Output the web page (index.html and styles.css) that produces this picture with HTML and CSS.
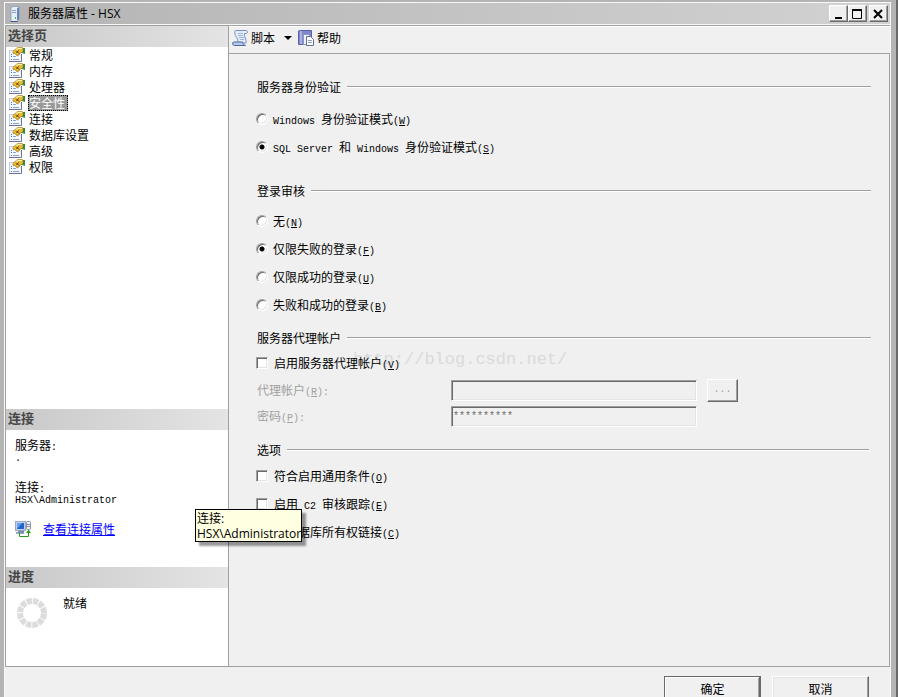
FILE: index.html
```html
<!DOCTYPE html>
<html lang="zh-CN">
<head>
  <meta charset="UTF-8">
  <meta name="viewport" content="width=device-width, initial-scale=1.0">
  <title>服务器属性 - HSX</title>
  <link rel="stylesheet" href="styles.css">
</head>
<body>
  <!-- Shared icons -->
  <svg class="sprite" aria-hidden="true">
    <symbol id="icon-page" viewBox="0 0 16 16">
      <path d="M0 3.500h12v11H0z" fill="#f4f7fd"/>
      <path d="M.5 15V3.500H5" fill="none" stroke="#c3cbe0"/>
      <path d="M0 14.500h12.500V7" fill="none" stroke="#66749f"/>
      <path d="M2 7.500h1M2 9.500h1M2 12.500h1" stroke="#3a78d8"/>
      <path d="M4 9.500h3M4 12.500h6" stroke="#8f9fc8"/>
      <path d="M13 1h3v6l-3-1z" fill="#2f8f3c"/>
      <path d="M4 4.500L7 1.500 9 .5h4l1 .5v4l-3 1-1 2-2 1-1-2-3-.5z" fill="#e9b730" stroke="#9c7218" stroke-width=".6"/>
      <path d="M7 2.500L9 1.500h4" stroke="#fff3a8" stroke-width="1.200" fill="none"/>
      <path d="M7.500 4l2.500 2.500M9.500 3.500L7.500 6" stroke="#5a4012" fill="none"/>
    </symbol>
  </svg>

  <div class="window">
    <header class="titlebar">
      <svg class="title-icon" viewBox="0 0 16 16" aria-hidden="true">
        <path d="M4 2l2-1.500h6V13l-2 2.500H4z" fill="#e6eefa" stroke="#8c9cb8" stroke-width=".8"/>
        <path d="M10 2.500V15l2-2V1z" fill="#6483b8"/>
        <path d="M5 4.500h4M5 6.500h4" stroke="#8fa5c8"/>
        <path d="M4 15.500h6.500" stroke="#3b527c"/>
        <rect x="8" y="11" width="1" height="2" fill="#47b04a"/>
      </svg>
      <h1 class="title">服务器属性 - HSX</h1>
      <div class="window-buttons">
        <button class="window-button" type="button" aria-label="最小化">
          <svg viewBox="0 0 14 13"><path d="M4 11h7" stroke="#000" stroke-width="2"/></svg>
        </button>
        <button class="window-button" type="button" aria-label="最大化">
          <svg viewBox="0 0 14 13"><path d="M2.500 2v9.500h9V2" fill="none" stroke="#000"/><path d="M2 3h10" stroke="#000" stroke-width="2"/></svg>
        </button>
        <button class="window-button close" type="button" aria-label="关闭">
          <svg viewBox="0 0 14 13"><path d="M3 3l8 8M11 3l-8 8" stroke="#000" stroke-width="2"/></svg>
        </button>
      </div>
    </header>

    <div class="workspace">
      <aside class="sidebar">
        <h2 class="panel-title">选择页</h2>
        <nav class="pages">
          <a href="#"><svg><use href="#icon-page"/></svg><span>常规</span></a>
          <a href="#"><svg><use href="#icon-page"/></svg><span>内存</span></a>
          <a href="#"><svg><use href="#icon-page"/></svg><span>处理器</span></a>
          <a href="#" class="selected"><svg><use href="#icon-page"/></svg><span>安全性</span></a>
          <a href="#"><svg><use href="#icon-page"/></svg><span>连接</span></a>
          <a href="#"><svg><use href="#icon-page"/></svg><span>数据库设置</span></a>
          <a href="#"><svg><use href="#icon-page"/></svg><span>高级</span></a>
          <a href="#"><svg><use href="#icon-page"/></svg><span>权限</span></a>
        </nav>

        <h2 class="panel-title">连接</h2>
        <div class="connection">
          <p>服务器<span class="en">:</span></p>
          <p class="value en">.</p>
          <p class="second">连接<span class="en">:</span></p>
          <p class="value en">HSX\Administrator</p>
          <div class="view-link">
            <svg viewBox="0 0 16 16" aria-hidden="true">
              <rect x=".5" y=".5" width="10" height="9" fill="#c3d0e8" stroke="#9aa8c4"/>
              <rect x="2" y="2" width="7" height="6" fill="#2463cf"/>
              <path d="M2 8l5-6H2z" fill="#63a0f0"/>
              <path d="M3 10.500h6M1 12h8" stroke="#7c8db0" stroke-width="1.500"/>
              <rect x="11.500" y=".5" width="4" height="8" rx="1" fill="#eef2f8" stroke="#8a93a6"/>
              <path d="M12 3.500h3M12 5.500h3" stroke="#8a93a6"/>
              <path d="M4.500 12v3.500h9V11" fill="none" stroke="#2f9a22"/>
              <path d="M11 12l2.500-3.500L16 12z" fill="#2f9a22"/>
            </svg>
            <a href="#">查看连接属性</a>
            <div class="tooltip" role="tooltip">连接:<br>HSX\Administrator</div>
          </div>
        </div>

        <h2 class="panel-title">进度</h2>
        <div class="progress">
          <svg viewBox="0 0 30 30" aria-hidden="true">
            <circle cx="15" cy="15" r="12" fill="none" stroke="#dcdcdc" stroke-width="6" stroke-dasharray="5.283 1" stroke-dashoffset="-.5"/>
          </svg>
          <span>就绪</span>
        </div>
      </aside>

      <main class="content">
        <div class="toolbar">
          <button class="tool" type="button">
            <svg viewBox="0 0 16 16" aria-hidden="true">
              <path d="M4 .5h10c2 0 2 3 0 3h-1.500c-1 3 2.500 6 1.500 9.500H5C8 9 2 6 3 3 2 2 3 .5 4 .5z" fill="#e3edfb" stroke="#7790bd"/>
              <path d="M1.500 12h9c0 2 1.500 3 3 3.500H2.500c-2 0-2.500-2.500-1-3.500z" fill="#b6c9ea" stroke="#4d689e"/>
              <path d="M6 3.500h5M6 5.500h5M7 7.500h5M8 9.500h4" stroke="#9db6e0"/>
            </svg>
            脚本
          </button>
          <button class="tool-arrow" type="button" aria-label="脚本选项"></button>
          <button class="tool" type="button">
            <svg viewBox="0 0 16 16" aria-hidden="true">
              <path d="M.5 1l1-.5h12v13l-1 1H.5z" fill="#8286cc" stroke="#5c60a4"/>
              <path d="M3 1v13" stroke="#d4d6f4"/>
              <path d="M5.500 4.500h5l2 2v8h-7z" fill="#eef3fb" stroke="#8c9abc"/>
              <path d="M8.500 6.500h4l3 3v6h-7z" fill="#fff" stroke="#5c7098"/>
              <path d="M10 10.500h4M10 12.500h4" stroke="#8ca2cc"/>
            </svg>
            帮助
          </button>
        </div>

        <form class="settings">
          <section class="group" role="radiogroup" aria-labelledby="auth">
            <h3 id="auth">服务器身份验证</h3>
            <label class="option"><input type="radio" name="auth"><span><span class="en">Windows </span>身份验证模式<span class="en">(<u>W</u>)</span></span></label>
            <label class="option"><input type="radio" name="auth" checked><span><span class="en">SQL Server </span>和<span class="en"> Windows </span>身份验证模式<span class="en">(<u>S</u>)</span></span></label>
          </section>

          <section class="group audit" role="radiogroup" aria-labelledby="audit">
            <h3 id="audit">登录审核</h3>
            <label class="option"><input type="radio" name="audit"><span>无<span class="en">(<u>N</u>)</span></span></label>
            <label class="option"><input type="radio" name="audit" checked><span>仅限失败的登录<span class="en">(<u>F</u>)</span></span></label>
            <label class="option"><input type="radio" name="audit"><span>仅限成功的登录<span class="en">(<u>U</u>)</span></span></label>
            <label class="option"><input type="radio" name="audit"><span>失败和成功的登录<span class="en">(<u>B</u>)</span></span></label>
          </section>

          <section class="group proxy">
            <div class="watermark">http://blog.csdn.net/</div>
            <h3>服务器代理帐户</h3>
            <label class="option"><input type="checkbox"><span>启用服务器代理帐户<span class="en">(<u>V</u>)</span></span></label>
            <div class="field">
              <label for="account">代理帐户<span class="en">(<u>R</u>):</span></label>
              <input id="account" type="text" disabled>
              <button class="browse" type="button" disabled>...</button>
            </div>
            <div class="field">
              <label for="password">密码<span class="en">(<u>P</u>):</span></label>
              <input id="password" type="text" value="**********" disabled>
            </div>
          </section>

          <section class="group options">
            <h3>选项</h3>
            <label class="option"><input type="checkbox"><span>符合启用通用条件<span class="en">(<u>O</u>)</span></span></label>
            <label class="option"><input type="checkbox"><span>启用<span class="en"> C2 </span>审核跟踪<span class="en">(<u>E</u>)</span></span></label>
            <label class="option"><input type="checkbox"><span>跨数据库所有权链接<span class="en">(<u>C</u>)</span></span></label>
          </section>
        </form>
      </main>
    </div>

    <footer class="actions">
      <button class="action default" type="button">确定</button>
      <button class="action" type="button">取消</button>
    </footer>
  </div>
</body>
</html>
```

FILE: styles.css
```css
* {
  box-sizing: border-box;
}

body {
  margin: 0;
  height: 100vh;
  overflow: hidden;
  padding: 2px 2px 0 4px;
  background: #b4b4b4;
  border-right: 2px solid #696969;
  color: #000;
  font: 12px/16px "Noto Sans CJK SC", sans-serif;
}

h1, h2, h3, p {
  margin: 0;
  font-size: 12px;
  font-weight: normal;
}

button, input {
  margin: 0;
  padding: 0;
  font: inherit;
  color: inherit;
}

u {
  text-underline-offset: 1px;
}

.sprite {
  position: absolute;
  width: 0;
  height: 0;
}

.en {
  font: 10px/12px "Liberation Mono", monospace;
  white-space: pre;
}

.window {
  height: 100%;
  display: flex;
  flex-direction: column;
  margin-right: 3px;
  background: #f0f0f0;
  border: 1px solid #f8f8f8;
  border-bottom: 0;
}

/* Title bar */
.titlebar {
  height: 22px;
  flex: none;
  display: flex;
  align-items: center;
  padding: 0 2px;
  background: linear-gradient(90deg, #b4b4b4, #d2d2d2);
  border-bottom: 1px solid #f8f8f8;
}

.title-icon {
  width: 16px;
  height: 16px;
}

.title {
  flex: 1;
  padding-left: 5px;
  font-family: "Open Sans", "Noto Sans CJK SC", sans-serif;
}

.window-buttons {
  display: flex;
}

.window-button {
  width: 19px;
  height: 17px;
  padding: 0 1px;
  background: #f0f0f0;
  border: 1px solid;
  border-color: #fff #696969 #696969 #fff;
  box-shadow: inset -1px -1px #a0a0a0;
}

.window-button.close {
  margin-left: 2px;
}

.window-button svg {
  display: block;
  width: 14px;
  height: 13px;
}

/* Workspace */
.workspace {
  flex: 1;
  min-height: 0;
  display: flex;
  border: 1px solid #a0a0a0;
  border-right: 0;
}

.sidebar {
  width: 223px;
  flex: none;
  display: flex;
  flex-direction: column;
  background: #fff;
  border-right: 1px solid #a0a0a0;
}

.panel-title {
  height: 21px;
  flex: none;
  padding-left: 2px;
  background: linear-gradient(90deg, #c8c8c8, #e4e4e4);
  color: #464646;
  font-size: 13px;
  font-weight: bold;
  line-height: 17px;
}

.pages {
  flex: 1;
}

.pages a {
  display: flex;
  height: 16px;
  padding-left: 3px;
  color: #000;
  text-decoration: none;
}

.pages svg {
  width: 16px;
  height: 16px;
  margin-right: 3px;
}

.pages span {
  padding: 0 2px 0 1px;
}

.pages .selected span {
  padding-right: 3px;
  background: #999;
  color: #fff;
  outline: 1px dotted #000;
  outline-offset: -1px;
}

.connection {
  height: 137px;
  padding: 7px 0 0 9px;
}

.connection .value {
  line-height: 10px;
}

.connection .second {
  margin-top: 15px;
}

.view-link {
  position: relative;
  display: flex;
  align-items: center;
  margin-top: 15px;
}

.view-link svg {
  width: 16px;
  height: 16px;
  margin-right: 12px;
}

.view-link a {
  color: #00f;
}

.tooltip {
  position: absolute;
  left: 180px;
  top: -12px;
  z-index: 2;
  padding: 1px 0 0 1px;
  background: #ffffe1;
  border: 1px solid #000;
  box-shadow: 4px 4px 2px rgba(0, 0, 0, .4);
  font: 12px/15px "Open Sans", "Noto Sans CJK SC", sans-serif;
  white-space: nowrap;
}

.progress {
  height: 78px;
  display: flex;
  align-items: flex-start;
  padding: 7px 0 0 11px;
}

.progress svg {
  width: 30px;
  height: 30px;
  margin: 3px 16px 0 0;
}

/* Toolbar */
.content {
  flex: 1;
  min-width: 0;
  display: flex;
  flex-direction: column;
}

.toolbar {
  height: 27px;
  flex: none;
  display: flex;
  align-items: center;
  padding: 0 0 4px 3px;
  border-top: 1px solid #fff;
}

.tool {
  display: flex;
  align-items: center;
  gap: 3px;
  background: none;
  border: 0;
}

.tool svg {
  width: 16px;
  height: 16px;
}

.tool-arrow {
  margin: 0 6px 0 9px;
  background: none;
  border: 4px solid transparent;
  border-top-color: #000;
  border-bottom: 0;
}

/* Settings form */
.settings {
  flex: 1;
  padding: 25px 18px 0 28px;
  border: 1px solid #a0a0a0;
  border-width: 1px 1px 0 0;
}

.group h3 {
  display: flex;
  align-items: center;
  gap: 6px;
  margin-bottom: 10px;
}

.group h3::after {
  content: "";
  flex: 1;
  height: 1px;
  background: #a0a0a0;
  border-bottom: 1px solid #fff;
}

.audit {
  margin-top: 22px;
}

.audit h3 {
  margin-bottom: 8px;
}

.proxy {
  position: relative;
  margin-top: 11px;
}

.proxy h3 {
  margin-bottom: 3px;
}

.options {
  margin-top: 13px;
}

.options h3 {
  margin: 0 2px 4px 0;
}

.option {
  position: relative;
  display: flex;
  align-items: center;
  width: max-content;
  height: 28px;
}

.option input {
  appearance: none;
  width: 12px;
  height: 12px;
  margin: 0 5px 0 -1px;
  background: #fff;
  border: 1px solid;
  border-color: #a0a0a0 #fff #fff #a0a0a0;
  box-shadow: inset 1px 1px #696969, inset -1px -1px #e3e3e3;
}

.option input[type="radio"] {
  border-radius: 50%;
}

.option input[type="radio"]:checked {
  background: radial-gradient(circle, #000 2px, #fff 3px);
}

.option input[type="checkbox"] {
  margin-right: 6px;
}

.field {
  display: flex;
  align-items: center;
  height: 26px;
  color: #a0a0a0;
}

.field label {
  width: 194px;
}

.field input {
  width: 246px;
  height: 21px;
  padding: 1px 0 0 1px;
  background: #f0f0f0;
  border: 1px solid;
  border-color: #a0a0a0 #fff #fff #a0a0a0;
  box-shadow: inset 1px 1px #696969, inset -1px -1px #e3e3e3;
  color: #6d6d6d;
  font: 10px/17px "Liberation Mono", monospace;
}

.browse {
  width: 31px;
  height: 23px;
  margin-left: 10px;
  background: #f0f0f0;
  border: 1px solid;
  border-color: #fff #696969 #696969 #fff;
  box-shadow: inset -1px -1px #a0a0a0;
  color: #a0a0a0;
  font: 10px/16px "Liberation Mono", monospace;
}

.watermark {
  position: absolute;
  left: 96px;
  top: 20px;
  color: #dadada;
  font: 17px/20px "Liberation Mono", monospace;
}

/* Footer */
.actions {
  height: 30px;
  flex: none;
  display: flex;
  justify-content: flex-end;
  gap: 11px;
  padding: 9px 21px 0 0;
}

.action {
  width: 97px;
  height: 25px;
  flex: none;
  background: #f0f0f0;
  border: 1px solid;
  border-color: #fff #696969 #696969 #fff;
  box-shadow: inset -1px -1px #a0a0a0, inset 1px 1px #e3e3e3;
}

.action.default {
  border-color: #696969;
  box-shadow: inset -1px -1px #696969, inset 1px 1px #fff, inset -2px -2px #a0a0a0;
}
```
